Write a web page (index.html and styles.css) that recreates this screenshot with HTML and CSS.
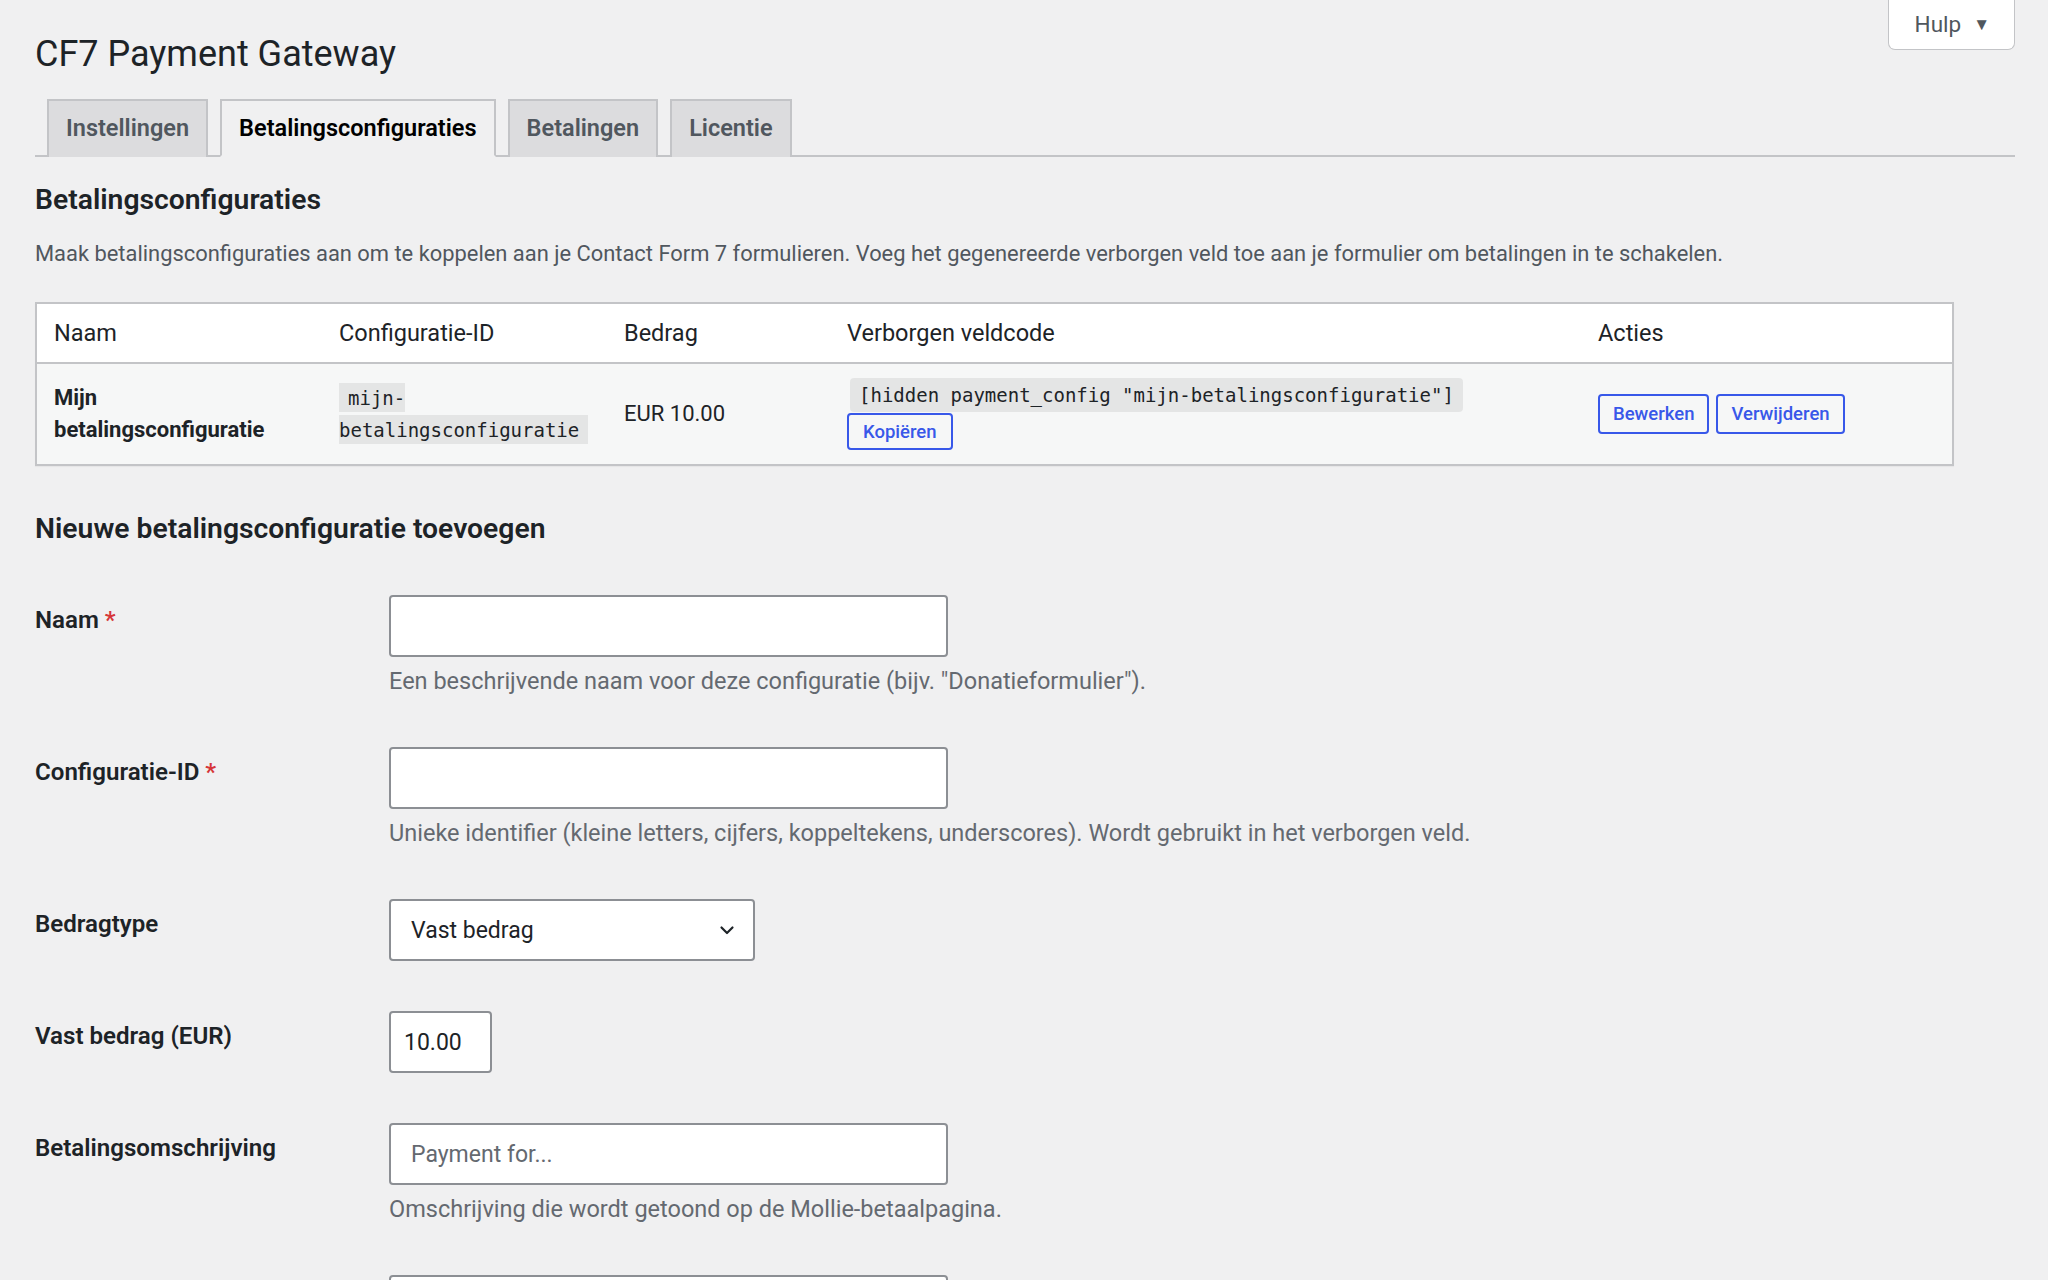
FILE: index.html
```html
<!DOCTYPE html>
<html lang="nl">
  <head>
    <meta charset="UTF-8">
    <title>CF7 Payment Gateway</title>
    <link rel="stylesheet" href="styles.css">
  </head>
  <body>
    <div class="wrap">
      <div class="page-head">
        <h1 class="page-title">CF7 Payment Gateway</h1>
        <button class="help-tab" type="button">Hulp <span class="help-arrow">&#9660;</span></button>
      </div>

      <nav class="nav-tabs">
        <a class="nav-tab" href="#">Instellingen</a>
        <a class="nav-tab active" href="#">Betalingsconfiguraties</a>
        <a class="nav-tab" href="#">Betalingen</a>
        <a class="nav-tab" href="#">Licentie</a>
      </nav>

      <h2 class="section-title">Betalingsconfiguraties</h2>
      <p class="intro">Maak betalingsconfiguraties aan om te koppelen aan je Contact Form 7 formulieren. Voeg het gegenereerde verborgen veld toe aan je formulier om betalingen in te schakelen.</p>

      <table class="configs">
        <colgroup>
          <col class="col-name">
          <col class="col-id">
          <col class="col-amount">
          <col class="col-code">
          <col class="col-actions">
        </colgroup>
        <thead>
          <tr>
            <th>Naam</th>
            <th>Configuratie-ID</th>
            <th>Bedrag</th>
            <th>Verborgen veldcode</th>
            <th>Acties</th>
          </tr>
        </thead>
        <tbody>
          <tr>
            <td><strong>Mijn betalingsconfiguratie</strong></td>
            <td><code>mijn-betalingsconfiguratie</code></td>
            <td>EUR 10.00</td>
            <td class="code-cell">
              <code class="shortcode">[hidden payment_config "mijn-betalingsconfiguratie"]</code>
              <button class="btn-small btn-copy" type="button">Kopiëren</button>
            </td>
            <td>
              <div class="row-actions">
                <button class="btn-small" type="button">Bewerken</button>
                <button class="btn-small" type="button">Verwijderen</button>
              </div>
            </td>
          </tr>
        </tbody>
      </table>

      <h2 class="section-title new-title">Nieuwe betalingsconfiguratie toevoegen</h2>

      <form class="config-form">
        <div class="form-row">
          <label class="form-label" for="cfg-name">Naam <span class="required">*</span></label>
          <div class="form-field">
            <input class="text-input" id="cfg-name" type="text">
            <p class="description">Een beschrijvende naam voor deze configuratie (bijv. "Donatieformulier").</p>
          </div>
        </div>

        <div class="form-row">
          <label class="form-label" for="cfg-id">Configuratie-ID <span class="required">*</span></label>
          <div class="form-field">
            <input class="text-input" id="cfg-id" type="text">
            <p class="description">Unieke identifier (kleine letters, cijfers, koppeltekens, underscores). Wordt gebruikt in het verborgen veld.</p>
          </div>
        </div>

        <div class="form-row">
          <label class="form-label" for="cfg-type">Bedragtype</label>
          <div class="form-field">
            <div class="select-wrap">
              <select class="select-input" id="cfg-type">
                <option>Vast bedrag</option>
                <option>Vrij bedrag</option>
              </select>
              <svg class="select-chevron" width="20" height="20" viewBox="0 0 20 20" aria-hidden="true">
                <path d="M4.5 7.5 10 13l5.5-5.5" fill="none" stroke="#1d2327" stroke-width="2.2" stroke-linecap="round" stroke-linejoin="round"/>
              </svg>
            </div>
          </div>
        </div>

        <div class="form-row">
          <label class="form-label" for="cfg-amount">Vast bedrag (EUR)</label>
          <div class="form-field">
            <input class="text-input amount-input" id="cfg-amount" type="text" value="10.00">
          </div>
        </div>

        <div class="form-row">
          <label class="form-label" for="cfg-desc">Betalingsomschrijving</label>
          <div class="form-field">
            <input class="text-input" id="cfg-desc" type="text" placeholder="Payment for...">
            <p class="description">Omschrijving die wordt getoond op de Mollie-betaalpagina.</p>
          </div>
        </div>

        <div class="form-row">
          <label class="form-label" for="cfg-redirect"></label>
          <div class="form-field">
            <input class="text-input" id="cfg-redirect" type="text">
          </div>
        </div>
      </form>
    </div>
  </body>
</html>
```

FILE: styles.css
```css
* {
  box-sizing: border-box;
}

html, body {
  height: 100%;
  overflow: hidden;
}

body {
  margin: 0;
  background: #f0f0f1;
  color: #1d2327;
  font-family: Roboto, "Noto Sans", sans-serif;
  font-size: 22.5px;
  line-height: 1.4;
}

.wrap {
  padding: 0 33px 0 35px;
}

/* title + help tab */
.page-head {
  display: flex;
  justify-content: space-between;
  align-items: flex-start;
}

.page-title {
  margin: 28px 0 0;
  font-size: 36px;
  font-weight: 400;
  line-height: 52px;
}

.help-tab {
  display: flex;
  align-items: center;
  gap: 12px;
  height: 50px;
  padding: 0 24px 0 26px;
  border: 1px solid #c3c4c7;
  border-top: none;
  border-radius: 0 0 7px 7px;
  background: #fff;
  color: #50575e;
  font: inherit;
  font-size: 22.5px;
}

.help-arrow {
  font-size: 17px;
}

/* tabs */
.nav-tabs {
  display: flex;
  gap: 12px;
  margin-top: 19px;
  padding-left: 12px;
  border-bottom: 2px solid #c3c4c7;
}

.nav-tab {
  margin-bottom: -2px;
  padding: 7px 17px;
  border: 2px solid #c3c4c7;
  border-bottom: none;
  background: #dcdcde;
  color: #50575e;
  font-size: 23.5px;
  font-weight: 600;
  line-height: 40px;
  text-decoration: none;
}

.nav-tab.active {
  background: #f0f0f1;
  color: #000;
  border-bottom: 2px solid #f0f0f1;
}

/* headings */
.section-title {
  margin: 23px 0 0;
  font-size: 28.3px;
  font-weight: 600;
  line-height: 40px;
}

.intro {
  margin: 18px 0 0;
  color: #50575e;
  font-size: 21.9px;
  line-height: 32px;
}

/* overview table */
.configs {
  width: 1919px;
  margin-top: 32px;
  border: 2px solid #c3c4c7;
  border-collapse: collapse;
  table-layout: fixed;
  background: #fff;
  box-shadow: 0 1px 1px rgba(0, 0, 0, .04);
}

.col-name { width: 286px; }
.col-id { width: 285px; }
.col-amount { width: 223px; }
.col-code { width: 751px; }

.configs th {
  padding: 13px 17px;
  border-bottom: 2px solid #c3c4c7;
  font-size: 23.5px;
  font-weight: 400;
  text-align: left;
  line-height: 32px;
}

.configs td {
  padding: 14px 17px;
  background: #f6f7f7;
  font-size: 22px;
  vertical-align: middle;
  line-height: 32px;
}

code {
  padding: 4px 9px 3px;
  background: rgba(0, 0, 0, .07);
  font-family: "DejaVu Sans Mono", monospace;
  font-size: 19px;
}

.code-cell .shortcode {
  display: inline-block;
  margin-left: 3px;
  padding: 1px 9px;
  border-radius: 4px;
  line-height: 32px;
}

.btn-small {
  display: inline-block;
  height: 40px;
  padding: 0 13px;
  border: 2px solid #3858e9;
  border-radius: 4px;
  background: #f6f7f7;
  color: #3858e9;
  font-family: inherit;
  font-size: 18.5px;
  font-weight: 500;
  cursor: pointer;
}

.btn-copy {
  display: block;
  height: 37px;
  margin-top: 1px;
  padding: 0 14px;
}

.row-actions {
  display: flex;
  gap: 7px;
}

/* add form */
.new-title {
  margin-top: 43px;
}

.config-form {
  margin-top: 21px;
}

.form-row {
  display: grid;
  grid-template-columns: 354px 1fr;
  padding: 25px 0;
}

.form-label {
  padding-top: 9px;
  font-size: 24.1px;
  font-weight: 600;
  line-height: 32px;
}

.required {
  color: #d63638;
}

.text-input,
.select-input {
  display: block;
  width: 559px;
  height: 62px;
  padding: 0 20px;
  border: 2px solid #8c8f94;
  border-radius: 4px;
  background: #fff;
  color: #1d2327;
  font-family: inherit;
  font-size: 23px;
}

.text-input::placeholder {
  color: #646970;
}

.amount-input {
  width: 103px;
  padding: 0 13px;
}

.select-wrap {
  position: relative;
  width: 366px;
}

.select-input {
  width: 100%;
  -webkit-appearance: none;
  appearance: none;
}

.select-chevron {
  position: absolute;
  right: 18px;
  top: 21px;
  pointer-events: none;
}

.description {
  margin: 8px 0 0;
  color: #646970;
  font-size: 23.5px;
  line-height: 32px;
}
```
